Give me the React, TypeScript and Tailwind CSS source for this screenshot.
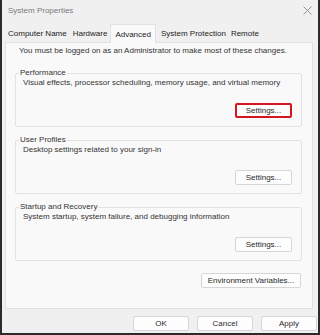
import React from 'react';

const font = { fontFamily: '"Liberation Sans", Arial, sans-serif' };

const WinButton: React.FC<{ label: string; className?: string; highlight?: boolean }> = ({
  label,
  className = '',
  highlight,
}) => (
  <button
    className={`flex items-center justify-center rounded-[2px] bg-[#fdfdfd] text-[8px] leading-[10px] text-[#2a2a2a] ${
      highlight ? 'border-2 border-[#d3161f]' : 'border border-[#d6d6d6]'
    } ${className}`}
  >
    {label}
  </button>
);

const Group: React.FC<{ title: string; text: string; highlight?: boolean; className?: string }> = ({
  title,
  text,
  highlight,
  className = '',
}) => (
  <fieldset className={`border border-[#e2e2e2] rounded-[2px] pl-[7px] pr-[9px] pb-[8px] ${className}`}>
    <legend className="-ml-[4px] px-[1px] text-[8px] leading-[10px] text-[#333]">{title}</legend>
    <div className="text-[8px] leading-[10px] text-[#333]">{text}</div>
    <div className="flex justify-end mt-[15px]">
      <WinButton label="Settings..." highlight={highlight} className="w-[57px] h-[15px]" />
    </div>
  </fieldset>
);

const tabs = [
  { label: 'Computer Name', cls: 'px-[3px]' },
  { label: 'Hardware', cls: 'px-[3px]' },
  { label: 'Advanced', cls: 'px-[4px]', active: true },
  { label: 'System Protection', cls: 'pl-[5px] pr-[3px]' },
  { label: 'Remote', cls: 'px-[2px]' },
];

export default function App() {
  return (
    <div className="w-[320px] h-[335px] bg-[#2b2b2b] pl-[2px] pr-[2px] pb-[2px]" style={font}>
      <div className="h-full bg-[#f0f0f0] flex flex-col">
        {/* Title bar */}
        <div className="h-[22px] flex items-center justify-between pl-[6px] pr-[6px] shrink-0">
          <span className="text-[8px] text-[#7a7a7a] -mt-[1px]">System Properties</span>
          <svg width="9" height="9" viewBox="0 0 9 9" className="-mt-[1px]">
            <path d="M0.5 0.5 L8.5 8.5 M8.5 0.5 L0.5 8.5" stroke="#8a8a8a" strokeWidth="0.9" />
          </svg>
        </div>

        {/* Tabs */}
        <div className="h-[20px] flex items-end pl-[3px] shrink-0 relative z-10">
          {tabs.map((t) =>
            t.active ? (
              <div
                key={t.label}
                className={`h-[19px] -mb-[1px] pt-[1px] flex items-center bg-[#fafafa] border border-b-0 border-[#e2e2e2] text-[8px] text-[#222] ${t.cls}`}
              >
                {t.label}
              </div>
            ) : (
              <div key={t.label} className={`h-[18px] pt-[1px] flex items-center text-[8px] text-[#222] ${t.cls}`}>
                {t.label}
              </div>
            )
          )}
        </div>

        {/* Panel */}
        <div className="h-[267px] ml-[3px] mr-[5px] bg-[#f9f9f9] border border-[#e2e2e2] pl-[9px] pr-[10px] pt-[3px] flex flex-col shrink-0">
          <div className="pl-[4px] text-[8px] leading-[10px] text-[#333]">
            You must be logged on as an Administrator to make most of these changes.
          </div>
          <Group
            className="mt-[12px]"
            title="Performance"
            text="Visual effects, processor scheduling, memory usage, and virtual memory"
            highlight
          />
          <Group className="mt-[8px]" title="User Profiles" text="Desktop settings related to your sign-in" />
          <Group
            className="mt-[8px]"
            title="Startup and Recovery"
            text="System startup, system failure, and debugging information"
          />
          <div className="flex justify-end mt-[12px] mr-[1px]">
            <WinButton label="Environment Variables..." className="w-[100px] h-[15px]" />
          </div>
        </div>

        {/* Footer */}
        <div className="flex-1 flex items-start pt-[7px] justify-end gap-[8px] pr-[1px]">
          <WinButton label="OK" className="w-[56px] h-[15px]" />
          <WinButton label="Cancel" className="w-[56px] h-[15px]" />
          <WinButton label="Apply" className="w-[56px] h-[15px]" />
        </div>
      </div>
    </div>
  );
}
